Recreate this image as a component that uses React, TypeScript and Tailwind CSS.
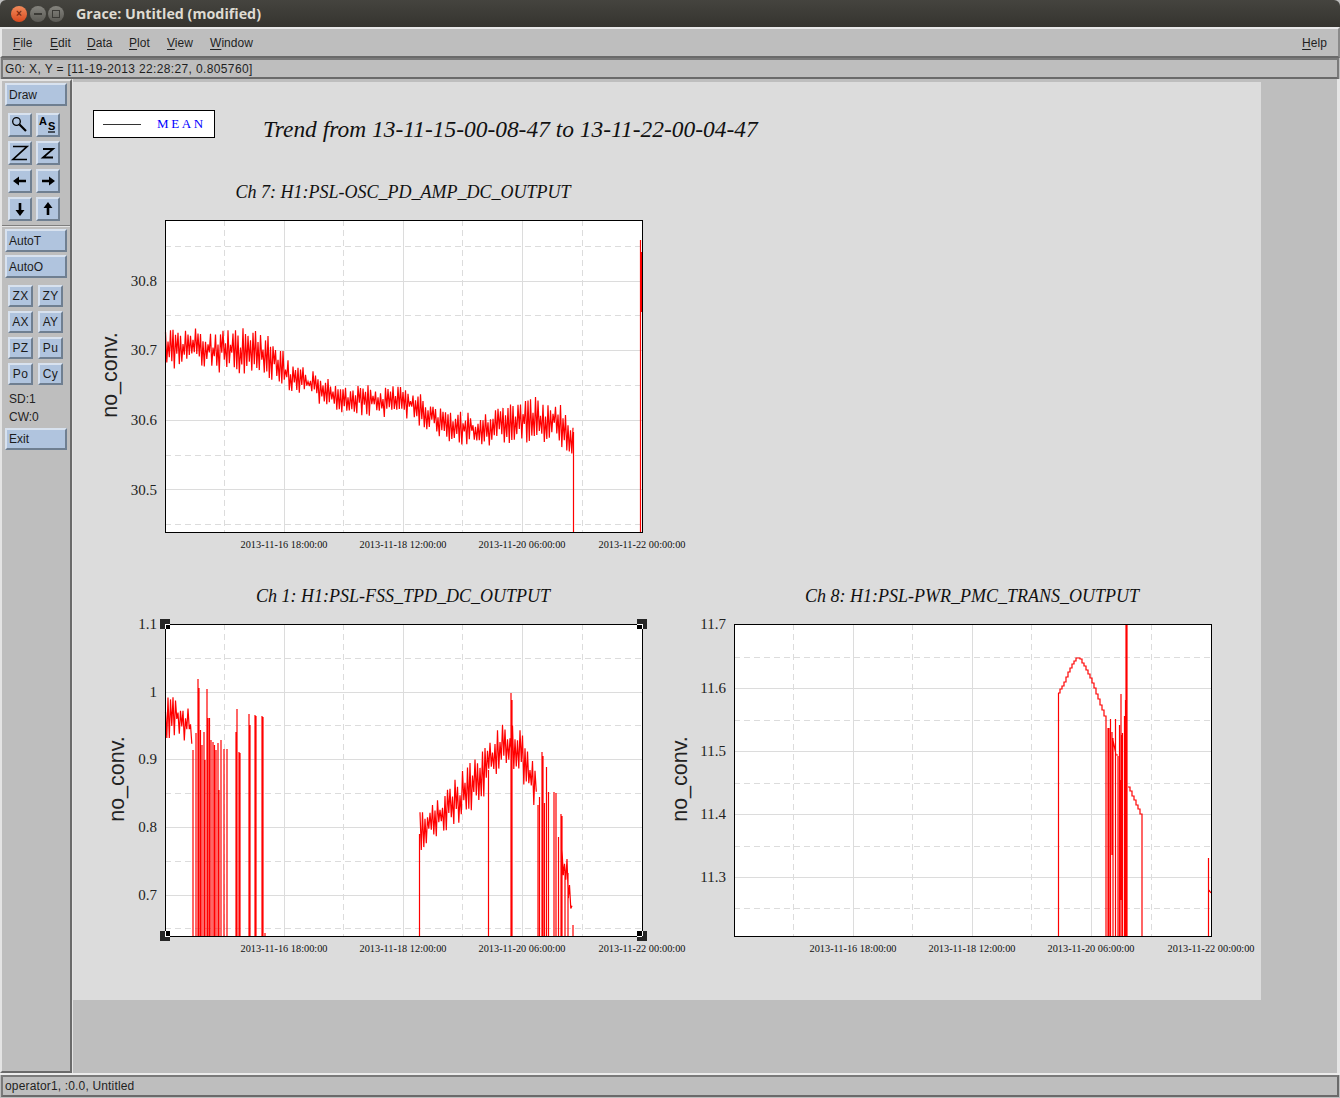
import type { ReactNode } from "react";

const SANS = "font-['Liberation_Sans',Arial,sans-serif]";
const RAISED =
  "border-2 border-t-[#d8e2ef] border-l-[#d8e2ef] border-r-[#6f7f91] border-b-[#6f7f91] bg-[#b0c4de] text-[#1c1c1c]";

const MENUS = [
  { label: "File", className: "w-[37px]" },
  { label: "Edit", className: "w-[37px]" },
  { label: "Data", className: "w-[42px]" },
  { label: "Plot", className: "w-[38px]" },
  { label: "View", className: "w-[43px]" },
  { label: "Window", className: "w-[60px]" },
];

// tiny seeded generator so the noisy traces stay the same between renders
function makeRandom(seed: number) {
  let s = seed;
  return () => {
    s = (s * 16807) % 2147483647;
    return (s - 1) / 2147483646;
  };
}

function interp(points: number[][], x: number, col: number) {
  for (let i = 1; i < points.length; i++) {
    if (x <= points[i][0]) {
      const [a, b] = [points[i - 1], points[i]];
      return a[col] + ((x - a[0]) / (b[0] - a[0])) * (b[col] - a[col]);
    }
  }
  return points[points.length - 1][col];
}

// points are [x, centre y, amplitude] in page pixels, drawn as vertical strokes
function noise(points: number[][], seed: number, step = 1.25) {
  const rand = makeRandom(seed);
  for (let i = 0; i < 5; i++) rand();
  const start = points[0][0];
  const end = points[points.length - 1][0];
  let d = "";
  let up = true;
  for (let x = start; x <= end; x += step) {
    const amp = interp(points, x, 2);
    const off = (up ? -1 : 1) * amp * Math.pow(0.05 + 0.95 * rand(), 0.8);
    up = !up;
    d += `${d ? "L" : "M"}${x.toFixed(1)} ${(interp(points, x, 1) + off).toFixed(1)}`;
  }
  return d;
}

// stepped line for the slow curve in channel 8
function stepped(points: number[][]) {
  let d = `M${points[0][0]} ${points[0][1]}`;
  for (let x = points[0][0] + 2; x <= points[points.length - 1][0]; x += 2) {
    d += `H${x}V${Math.round(interp(points, x, 1))}`;
  }
  return d;
}

function spikes(list: number[][], bottom: number) {
  return list.map(([x, top]) => `M${x} ${bottom}V${top}`).join("");
}

const CH7_TRACE =
  noise(
    [
      [165.5, 349, 19],
      [225, 350, 23],
      [264, 352, 23],
      [290, 376, 17],
      [340, 398, 15],
      [410, 404, 17],
      [450, 426, 17],
      [490, 430, 18],
      [520, 420, 22],
      [555, 420, 25],
      [573, 438, 17],
    ],
    77,
  ) + "M573.5 432V532M640.5 532V240M641.5 252V312";

const CH1_TRACE =
  noise(
    [
      [165.5, 718, 22],
      [180, 716, 22],
      [192, 728, 20],
    ],
    19,
  ) +
  spikes(
    [
      [193, 750], [196, 733], [198, 679], [199, 688], [200.5, 730], [202, 745], [204, 732], [205, 760],
      [207, 689], [208, 718], [209.5, 718], [211, 740], [213, 742], [214.5, 745], [216, 750], [218, 743],
      [219, 790], [221, 740], [224, 749], [227, 749], [236, 732], [237, 709], [239, 752], [240, 753],
      [249, 714], [250, 725], [255, 715], [256, 716], [262, 716], [263, 717], [265, 933],
    ],
    936,
  ) +
  noise(
    [
      [420, 832, 20],
      [450, 808, 24],
      [480, 778, 26],
      [500, 745, 24],
      [512, 742, 26],
      [522, 755, 26],
      [537, 790, 24],
    ],
    41,
  ) +
  spikes(
    [
      [419.5, 834], [488.5, 770], [511, 693], [512, 700], [538, 805], [539.5, 797], [542, 752], [543, 756],
      [544.5, 803], [546.5, 767], [548.5, 792], [554, 792], [556, 793], [558.5, 837], [561, 814], [562, 816],
      [565, 872], [568, 873], [573, 925],
    ],
    936,
  ) +
  noise(
    [
      [562, 860, 22],
      [568, 882, 20],
      [573, 918, 14],
    ],
    93,
  );

const CH8_TRACE =
  "M1058.5 936V693" +
  stepped([
    [1058, 693],
    [1064, 682],
    [1069, 670],
    [1073, 662],
    [1077, 657],
    [1080, 659],
    [1085, 668],
    [1091, 680],
    [1098, 699],
    [1106, 721],
  ]) +
  "V936" +
  spikes(
    [
      [1108, 728], [1109, 728], [1110.5, 719], [1113, 738], [1115.5, 719], [1118, 756], [1119.5, 725],
      [1121, 694], [1122.5, 733], [1124.5, 716], [1125.5, 716],
    ],
    936,
  ) +
  "M1112 732V855M1113 740L1116 755L1118 755M1120 780V900M1122 735V900M1127 624V936M1126 624V936M1125.5 700V850" +
  stepped([
    [1128, 787],
    [1133, 798],
    [1137, 807],
    [1142, 818],
  ]) +
  "V936M1208.5 936V858M1209 890L1211 893";

function Chart({
  title,
  x,
  y,
  yTicks,
  solidY,
  dashedY,
  labelX,
  labelY,
  trace,
  handles,
}: {
  title: string;
  x: number;
  y: number;
  yTicks: { label: string; y: number }[];
  solidY: number[];
  dashedY: number[];
  labelX: number;
  labelY: number;
  trace: string;
  handles?: boolean;
}) {
  const right = x + 477;
  const bottom = y + 312;
  return (
    <svg width="569" height="382" viewBox={`${x - 70} ${y - 40} 569 382`} className="block overflow-visible">
      <text
        x={x + 238}
        y={y - 22}
        textAnchor="middle"
        fontSize="18"
        fontStyle="italic"
        fill="#111"
        fontFamily="'Liberation Serif', serif"
      >
        {title}
      </text>
      <rect x={x} y={y} width="477" height="312" fill="#fff" />
      {[119, 238, 357].map((dx) => (
        <path key={dx} d={`M${x + dx}.5 ${y}V${bottom}`} stroke="#dcdcdc" />
      ))}
      {[59, 178, 297, 417].map((dx) => (
        <path key={dx} d={`M${x + dx}.5 ${y}V${bottom}`} stroke="#dcdcdc" strokeDasharray="6 4" />
      ))}
      {solidY.map((gy) => (
        <path key={gy} d={`M${x} ${gy}.5H${right}`} stroke="#dcdcdc" />
      ))}
      {dashedY.map((gy) => (
        <path key={gy} d={`M${x} ${gy}.5H${right}`} stroke="#dcdcdc" strokeDasharray="6 4" />
      ))}
      <path d={trace} fill="none" stroke="#ff0000" strokeWidth="1.2" />
      <rect x={x + 0.5} y={y + 0.5} width="477" height="312" fill="none" stroke="#000" />
      {yTicks.map((t) => (
        <text
          key={t.label}
          x={x - 8}
          y={t.y + 5}
          textAnchor="end"
          fontSize="15"
          fill="#222"
          fontFamily="'Liberation Serif', serif"
        >
          {t.label}
        </text>
      ))}
      {[
        ["2013-11-16 18:00:00", 119],
        ["2013-11-18 12:00:00", 238],
        ["2013-11-20 06:00:00", 357],
        ["2013-11-22 00:00:00", 477],
      ].map(([label, dx]) => (
        <text
          key={label}
          x={x + Number(dx)}
          y={y + 328}
          textAnchor="middle"
          fontSize="10"
          textLength="87"
          lengthAdjust="spacingAndGlyphs"
          fill="#111"
          fontFamily="'Liberation Serif', serif"
        >
          {label}
        </text>
      ))}
      <text
        transform={`translate(${labelX} ${labelY}) rotate(-90)`}
        textAnchor="middle"
        fontSize="21.5"
        fill="#222"
        fontFamily="'Liberation Sans', sans-serif"
      >
        no_conv.
      </text>
      {handles &&
        [
          [x, y],
          [right, y],
          [x, bottom],
          [right, bottom],
        ].map(([hx, hy]) => {
          const qx = hx === x ? hx : hx - 5;
          const qy = hy === y ? hy : hy - 5;
          return (
            <g key={`${hx}-${hy}`}>
              <rect x={hx - 5} y={hy - 5} width="10" height="10" fill="#262626" />
              <rect x={qx} y={qy} width="5" height="5" fill="#000" />
              <path d={`M${qx} ${hy + 0.5}h5M${hx + 0.5} ${qy}v5`} stroke="#fff" />
            </g>
          );
        })}
    </svg>
  );
}

function TextButton({ label, className }: { label: string; className: string }) {
  return <button className={`${RAISED} ${className} flex items-center text-[12px] leading-none`}>{label}</button>;
}

function IconButton({ children }: { children: ReactNode }) {
  return (
    <button className={`${RAISED} w-[24px] h-[24px] flex items-center justify-center`}>
      <svg width="20" height="20" viewBox="0 0 20 20" fill="none" stroke="#000">
        {children}
      </svg>
    </button>
  );
}

function SmallButton({ label }: { label: string }) {
  return (
    <button className={`${RAISED} w-[25px] h-[22px] flex items-center justify-center text-[12px] tracking-[0.3px] leading-none`}>
      {label}
    </button>
  );
}

const Arrow = ({ d }: { d: string }) => <path d={d} fill="#000" stroke="none" />;

function ToolPanel() {
  return (
    <div className="w-[72px] shrink-0 border-2 border-l-[#e4e4e4] border-t-[#e4e4e4] border-r-[#6a6a6a] border-b-[#6a6a6a] flex flex-col pt-[2px]">
      <TextButton label="Draw" className="ml-[3px] w-[62px] h-[23px] pl-[2px]" />
      <div className="ml-[6px] mt-[7px] grid grid-cols-[24px_24px] gap-x-[4px] gap-y-[4px]">
        <IconButton>
          <circle cx="6.5" cy="6.5" r="3.8" strokeWidth="1.3" />
          <path d="M9.5 9.5L16 16" strokeWidth="2.2" />
        </IconButton>
        <IconButton>
          <text x="1" y="10" fontSize="11" fontWeight="bold" fill="#000" stroke="none" fontFamily="'Liberation Sans', sans-serif">
            A
          </text>
          <text x="10" y="15" fontSize="11" fontWeight="bold" fill="#000" stroke="none" fontFamily="'Liberation Sans', sans-serif">
            S
          </text>
          <path d="M10 17H17" strokeWidth="1.2" />
        </IconButton>
        <IconButton>
          <path d="M3 3.5H17L3 16.5H17" strokeWidth="1.7" />
        </IconButton>
        <IconButton>
          <path d="M5 6H15L5 14.5H15" strokeWidth="1.8" />
        </IconButton>
        <IconButton>
          <Arrow d="M3 10L9 5.5V8.7H16V11.3H9V14.5Z" />
        </IconButton>
        <IconButton>
          <Arrow d="M17 10L11 5.5V8.7H4V11.3H11V14.5Z" />
        </IconButton>
        <IconButton>
          <Arrow d="M10 17L5.5 11H8.7V4H11.3V11H14.5Z" />
        </IconButton>
        <IconButton>
          <Arrow d="M10 3L5.5 9H8.7V16H11.3V9H14.5Z" />
        </IconButton>
      </div>
      <div className="mt-[4px] border-t border-t-[#7e7e7e] border-b border-b-[#e4e4e4] h-[2px]" />
      <TextButton label="AutoT" className="ml-[3px] mt-[2px] w-[62px] h-[23px] pl-[2px]" />
      <TextButton label="AutoO" className="ml-[3px] mt-[3px] w-[62px] h-[23px] pl-[2px]" />
      <div className="ml-[6px] mt-[7px] grid grid-cols-[25px_25px] gap-x-[5px] gap-y-[4px]">
        {["ZX", "ZY", "AX", "AY", "PZ", "Pu", "Po", "Cy"].map((label) => (
          <SmallButton key={label} label={label} />
        ))}
      </div>
      <div className="ml-[7px] mt-[5px] text-[12px] leading-[18px] text-[#222]">
        <div>SD:1</div>
        <div>CW:0</div>
      </div>
      <TextButton label="Exit" className="ml-[3px] mt-[2px] w-[62px] h-[22px] pl-[2px]" />
    </div>
  );
}

export default function App() {
  return (
    <div className={`w-[1340px] h-[1098px] flex flex-col overflow-hidden bg-[#bebebe] ${SANS}`}>
      {/* window manager title bar */}
      <div className="h-[27px] shrink-0 rounded-t-[6px] bg-gradient-to-b from-[#45443f] to-[#35342f] flex items-center pl-[11px]">
        <div className="flex items-center gap-[2.5px]">
          <span className="w-[16px] h-[16px] rounded-full bg-gradient-to-b from-[#f08a5a] to-[#d9481c] flex items-center justify-center text-[10px] leading-none text-[#7a2a10] font-bold">
            ×
          </span>
          <span className="w-[16px] h-[16px] rounded-full bg-gradient-to-b from-[#85847e] to-[#5b5a55] flex items-center justify-center">
            <span className="w-[8px] h-[2px] bg-[#3b3a36]" />
          </span>
          <span className="w-[16px] h-[16px] rounded-full bg-gradient-to-b from-[#85847e] to-[#5b5a55] flex items-center justify-center">
            <span className="w-[8px] h-[8px] border border-[#3b3a36]" />
          </span>
        </div>
        <span className="ml-[12px] text-[14.3px] font-bold text-[#dfdbd2] font-['Open_Sans','Noto_Sans',sans-serif]">
          Grace: Untitled (modified)
        </span>
      </div>

      {/* menu bar */}
      <div className="h-[31px] shrink-0 border-2 border-t-[#e8e8e8] border-l-[#e8e8e8] border-r-[#8a8a8a] border-b-[#6a6a6a] flex items-center pl-[11px] pr-[11px] text-[12px] tracking-[0.05px] text-[#1f1f1f]">
        {MENUS.map((m) => (
          <span key={m.label} className={m.className}>
            <span className="underline underline-offset-2">{m.label[0]}</span>
            {m.label.slice(1)}
          </span>
        ))}
        <span className="ml-auto">
          <span className="underline underline-offset-2">H</span>elp
        </span>
      </div>

      {/* locator bar */}
      <div className="h-[21px] shrink-0 mx-[1px] border-2 border-t-[#7a7a7a] border-l-[#7a7a7a] border-r-[#7a7a7a] border-b-[#6a6a6a] flex items-center pl-[2px] text-[12px] tracking-[0.36px] text-[#1f1f1f]">
        G0: X, Y = [11-19-2013 22:28:27, 0.805760]
      </div>

      <div className="flex-1 min-h-0 flex border-b-2 border-b-[#ececec]">
        <ToolPanel />
        <div className="flex-1 min-w-0 border-l border-l-[#e4e4e4] border-r-[3px] border-r-[#e6e6e6] pt-[3px]">
          <div className="w-[1188px] h-[918px] bg-[#dcdcdc] pl-[20px] pt-[28px]">
            <div className="flex h-[28px]">
              <div className="w-[122px] h-[28px] bg-white border border-black flex items-center pl-[9px] font-['Liberation_Serif',serif] text-[13px] tracking-[2.6px] text-[#0000ff]">
                <span className="w-[38px] h-px bg-[#333] mr-[16px]" />
                MEAN
              </div>
              <div className="ml-[48px] mt-[2px] font-['Liberation_Serif',serif] italic text-[23.45px] leading-[34px] text-[#111] whitespace-nowrap">
                Trend from 13-11-15-00-08-47 to 13-11-22-00-04-47
              </div>
            </div>
            <div className="ml-[2px] mt-[42px] grid grid-cols-[569px_569px] gap-y-[22px]">
              <Chart
                title="Ch 7: H1:PSL-OSC_PD_AMP_DC_OUTPUT"
                x={165}
                y={220}
                yTicks={[
                  { label: "30.8", y: 281 },
                  { label: "30.7", y: 350 },
                  { label: "30.6", y: 420 },
                  { label: "30.5", y: 490 },
                ]}
                solidY={[281, 350, 420, 489]}
                dashedY={[246, 315, 385, 455, 524]}
                labelX={117}
                labelY={375}
                trace={CH7_TRACE}
              />
              <div />
              <Chart
                title="Ch 1: H1:PSL-FSS_TPD_DC_OUTPUT"
                x={165}
                y={624}
                yTicks={[
                  { label: "1.1", y: 624 },
                  { label: "1", y: 692 },
                  { label: "0.9", y: 759 },
                  { label: "0.8", y: 827 },
                  { label: "0.7", y: 895 },
                ]}
                solidY={[692, 759, 827, 895]}
                dashedY={[658, 725, 793, 861, 928]}
                labelX={124}
                labelY={779}
                trace={CH1_TRACE}
                handles
              />
              <Chart
                title="Ch 8: H1:PSL-PWR_PMC_TRANS_OUTPUT"
                x={734}
                y={624}
                yTicks={[
                  { label: "11.7", y: 624 },
                  { label: "11.6", y: 688 },
                  { label: "11.5", y: 751 },
                  { label: "11.4", y: 814 },
                  { label: "11.3", y: 877 },
                ]}
                solidY={[688, 751, 814, 877]}
                dashedY={[657, 720, 783, 846, 908]}
                labelX={687}
                labelY={779}
                trace={CH8_TRACE}
              />
            </div>
          </div>
        </div>
      </div>

      {/* bottom status line */}
      <div className="h-[22px] shrink-0 mx-[1px] mb-[1px] border-2 border-t-[#7a7a7a] border-l-[#7a7a7a] border-r-[#6a6a6a] border-b-[#6a6a6a] flex items-center pl-[2px] text-[12px] tracking-[0.16px] text-[#1f1f1f]">
        operator1, :0.0, Untitled
      </div>
    </div>
  );
}
